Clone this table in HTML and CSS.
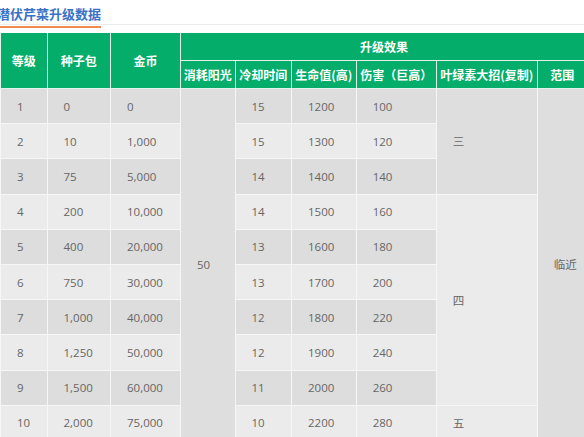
FILE: index.html
```html
<!DOCTYPE html>
<html lang="zh-CN">
<head>
<meta charset="utf-8">
<title>潜伏芹菜升级数据</title>
<link rel="stylesheet" href="styles.css">
</head>
<body>
<div class="page">
  <div class="title-bar"><h2 class="title">潜伏芹菜升级数据</h2></div>
  <table class="data">
    <colgroup>
      <col class="c1"><col class="c2"><col class="c3"><col class="c4"><col class="c5"><col class="c6"><col class="c7"><col class="c8"><col class="c9">
    </colgroup>
    <thead>
      <tr class="h1">
        <th rowspan="2">等级</th>
        <th rowspan="2">种子包</th>
        <th rowspan="2">金币</th>
        <th colspan="6">升级效果</th>
      </tr>
      <tr class="h2">
        <th>消耗阳光</th>
        <th>冷却时间</th>
        <th>生命值(高)</th>
        <th>伤害（巨高）</th>
        <th>叶绿素大招(复制)</th>
        <th>范围</th>
      </tr>
    </thead>
    <tbody>
      <tr><td>1</td><td>0</td><td>0</td><td rowspan="10">50</td><td>15</td><td>1200</td><td>100</td><td rowspan="3">三</td><td rowspan="10">临近</td></tr>
      <tr><td>2</td><td>10</td><td>1,000</td><td>15</td><td>1300</td><td>120</td></tr>
      <tr><td>3</td><td>75</td><td>5,000</td><td>14</td><td>1400</td><td>140</td></tr>
      <tr><td>4</td><td>200</td><td>10,000</td><td>14</td><td>1500</td><td>160</td><td rowspan="6">四</td></tr>
      <tr><td>5</td><td>400</td><td>20,000</td><td>13</td><td>1600</td><td>180</td></tr>
      <tr><td>6</td><td>750</td><td>30,000</td><td>13</td><td>1700</td><td>200</td></tr>
      <tr><td>7</td><td>1,000</td><td>40,000</td><td>12</td><td>1800</td><td>220</td></tr>
      <tr><td>8</td><td>1,250</td><td>50,000</td><td>12</td><td>1900</td><td>240</td></tr>
      <tr><td>9</td><td>1,500</td><td>60,000</td><td>11</td><td>2000</td><td>260</td></tr>
      <tr><td>10</td><td>2,000</td><td>75,000</td><td>10</td><td>2200</td><td>280</td><td>五</td></tr>
    </tbody>
  </table>
</div>
</body>
</html>
```
FILE: styles.css
```css
html, body {
  margin: 0;
  padding: 0;
  background: #fff;
  overflow: hidden;
}
.page {
  width: 600px;
  font-family: "Noto Sans CJK SC", sans-serif;
}
.title-bar {
  border-bottom: 1px solid #ececec;
  height: 24px;
}
.title {
  display: inline-block;
  margin: 0 0 0 -3px;
  padding: 0 0 2px 0;
  font-size: 13px;
  line-height: 20px;
  font-weight: bold;
  color: #3a72c8;
  border-bottom: 2px solid #f08a4c;
}
.data {
  margin-top: 8px;
  border-collapse: collapse;
  table-layout: fixed;
  width: 587px;
}
.c1 { width: 46.5px; }
.c2 { width: 63.5px; }
.c3 { width: 70px; }
.c4 { width: 54.5px; }
.c5 { width: 56.5px; }
.c6 { width: 64.7px; }
.c7 { width: 80px; }
.c8 { width: 101px; }
.c9 { width: 50.3px; }
.data th {
  background: #04ad6a;
  color: #fff;
  font-size: 12px;
  font-weight: bold;
  border: 1px solid #e3f3ea;
  border-top: none;
  padding: 0;
  height: 27px;
  text-align: center;
  white-space: nowrap;
}
.data td {
  font-family: "Open Sans", "Noto Sans CJK SC", sans-serif;
  font-size: 11.5px;
  color: #666;
  border: 1px solid #f6f6f6;
  padding: 0 0 0 16px;
  height: 34.2px;
  text-align: left;
  white-space: nowrap;
}
.data tbody tr:nth-child(odd) td { background: #dddddd; }
.data tbody tr:nth-child(even) td { background: #ebebeb; }
.data tbody tr:first-child td[rowspan] { background: #dedede; }
```
